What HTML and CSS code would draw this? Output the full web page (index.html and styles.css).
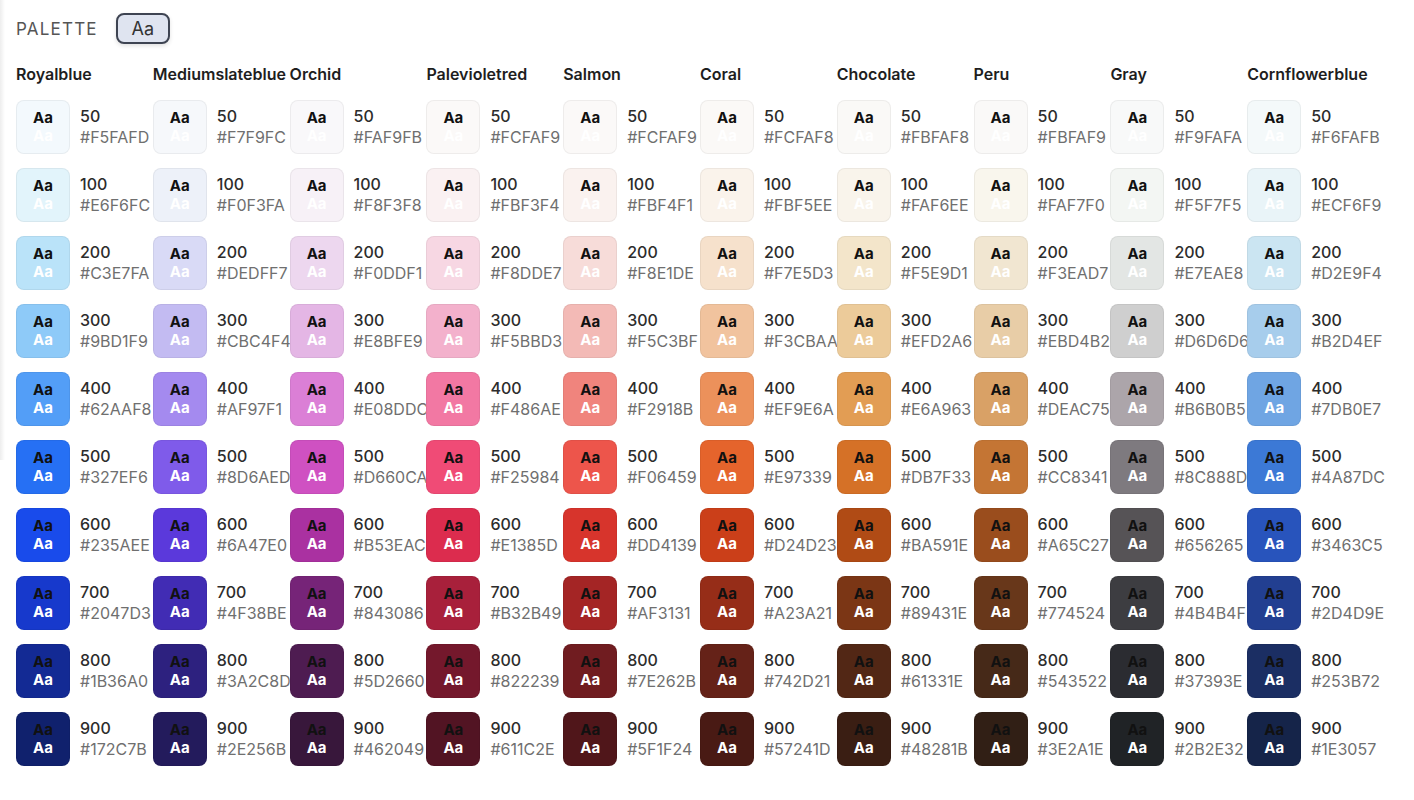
FILE: index.html
```html
<!DOCTYPE html>
<html lang="en">
<head>
<meta charset="utf-8">
<title>Palette</title>
<link rel="stylesheet" href="styles.css">
</head>
<body>
<div class="page">
  <header class="top">
    <span class="title">PALETTE</span>
    <button class="toggle">Aa</button>
  </header>
  <main class="palette" id="palette"></main>
</div>
<script src="app.js"></script>
</body>
</html>
```
FILE: styles.css
```css
* { box-sizing: border-box; }
html, body { margin: 0; padding: 0; background: #fff; }
body {
  font-family: Inter, "Noto Sans", sans-serif;
  color: #222;
}
.page {
  width: 1414px;
  height: 800px;
  padding: 13px 0 0 16px;
  background-image: linear-gradient(to right, rgba(0,0,0,0.07), rgba(0,0,0,0) 5px);
  background-size: 6px 460px;
  background-repeat: no-repeat;
}
.top {
  display: flex;
  align-items: center;
  gap: 18px;
  height: 31px;
}
.title {
  font-size: 17px;
  letter-spacing: 1.2px;
  color: #555;
  font-weight: 400;
}
.toggle {
  width: 54px;
  height: 31px;
  border: 2px solid #3e4452;
  border-radius: 8px;
  background: #dfe4f0;
  font-family: inherit;
  font-size: 18px;
  color: #333;
  padding: 0;
  box-shadow: 0 2px 4px rgba(0,0,0,0.12);
}
.palette {
  display: grid;
  grid-template-columns: repeat(10, 136.8px);
  margin-top: 20px;
}
.col {
  display: flex;
  flex-direction: column;
  gap: 14px;
}
.name {
  margin: 0 0 2px;
  height: 20px;
  line-height: 20px;
  font-size: 16px;
  font-weight: 600;
  color: #1e1e1e;
  white-space: nowrap;
}
.cell {
  display: flex;
  align-items: center;
  gap: 10px;
  height: 54px;
}
.sw {
  flex: none;
  width: 54px;
  height: 54px;
  border-radius: 8px;
  border: 1px solid rgba(0,0,0,0.05);
  box-shadow: 0 0 0 1px rgba(255,255,255,0.15);
  display: flex;
  flex-direction: column;
  align-items: center;
  justify-content: center;
  font-size: 15px;
  font-weight: 700;
  line-height: 18px;
}
.sw .dk { color: #111; }
.sw .lt { color: #fff; }
.meta {
  display: flex;
  flex-direction: column;
  font-size: 16px;
  line-height: 21px;
  white-space: nowrap;
}
.shade { color: #2c2c2c; font-weight: 500; }
.hex { color: #6f6f6f; font-weight: 400; }
```
FILE: app.js
```js
const data = [
  ["Royalblue", "F5FAFD E6F6FC C3E7FA 9BD1F9 62AAF8 327EF6 235AEE 2047D3 1B36A0 172C7B"],
  ["Mediumslateblue", "F7F9FC F0F3FA DEDFF7 CBC4F4 AF97F1 8D6AED 6A47E0 4F38BE 3A2C8D 2E256B"],
  ["Orchid", "FAF9FB F8F3F8 F0DDF1 E8BFE9 E08DDC D660CA B53EAC 843086 5D2660 462049"],
  ["Palevioletred", "FCFAF9 FBF3F4 F8DDE7 F5BBD3 F486AE F25984 E1385D B32B49 822239 611C2E"],
  ["Salmon", "FCFAF9 FBF4F1 F8E1DE F5C3BF F2918B F06459 DD4139 AF3131 7E262B 5F1F24"],
  ["Coral", "FCFAF8 FBF5EE F7E5D3 F3CBAA EF9E6A E97339 D24D23 A23A21 742D21 57241D"],
  ["Chocolate", "FBFAF8 FAF6EE F5E9D1 EFD2A6 E6A963 DB7F33 BA591E 89431E 61331E 48281B"],
  ["Peru", "FBFAF9 FAF7F0 F3EAD7 EBD4B2 DEAC75 CC8341 A65C27 774524 543522 3E2A1E"],
  ["Gray", "F9FAFA F5F7F5 E7EAE8 D6D6D6 B6B0B5 8C888D 656265 4B4B4F 37393E 2B2E32"],
  ["Cornflowerblue", "F6FAFB ECF6F9 D2E9F4 B2D4EF 7DB0E7 4A87DC 3463C5 2D4D9E 253B72 1E3057"]
];
const shades = ["50","100","200","300","400","500","600","700","800","900"];
/* displayed tone: slight gamma deepening, as rendered in the reference */
function tone(hx) {
  const out = [0, 2, 4].map(i => {
    const c = parseInt(hx.substr(i, 2), 16) / 255;
    const v = Math.round(255 * (0.97 + 0.03 * c) * Math.pow(c, 1.15));
    return Math.max(0, Math.min(255, v));
  });
  return "rgb(" + out.join(",") + ")";
}
const root = document.getElementById("palette");
for (const [name, hexes] of data) {
  const col = document.createElement("section");
  col.className = "col";
  const h = document.createElement("h3");
  h.className = "name";
  h.textContent = name;
  col.appendChild(h);
  hexes.split(" ").forEach((hx, i) => {
    const cell = document.createElement("div");
    cell.className = "cell";
    const sw = document.createElement("div");
    sw.className = "sw";
    sw.style.background = tone(hx);
    sw.innerHTML = '<span class="dk">Aa</span><span class="lt">Aa</span>';
    const meta = document.createElement("div");
    meta.className = "meta";
    meta.innerHTML = '<span class="shade">' + shades[i] + '</span><span class="hex">#' + hx + '</span>';
    cell.appendChild(sw);
    cell.appendChild(meta);
    col.appendChild(cell);
  });
  root.appendChild(col);
}
```
